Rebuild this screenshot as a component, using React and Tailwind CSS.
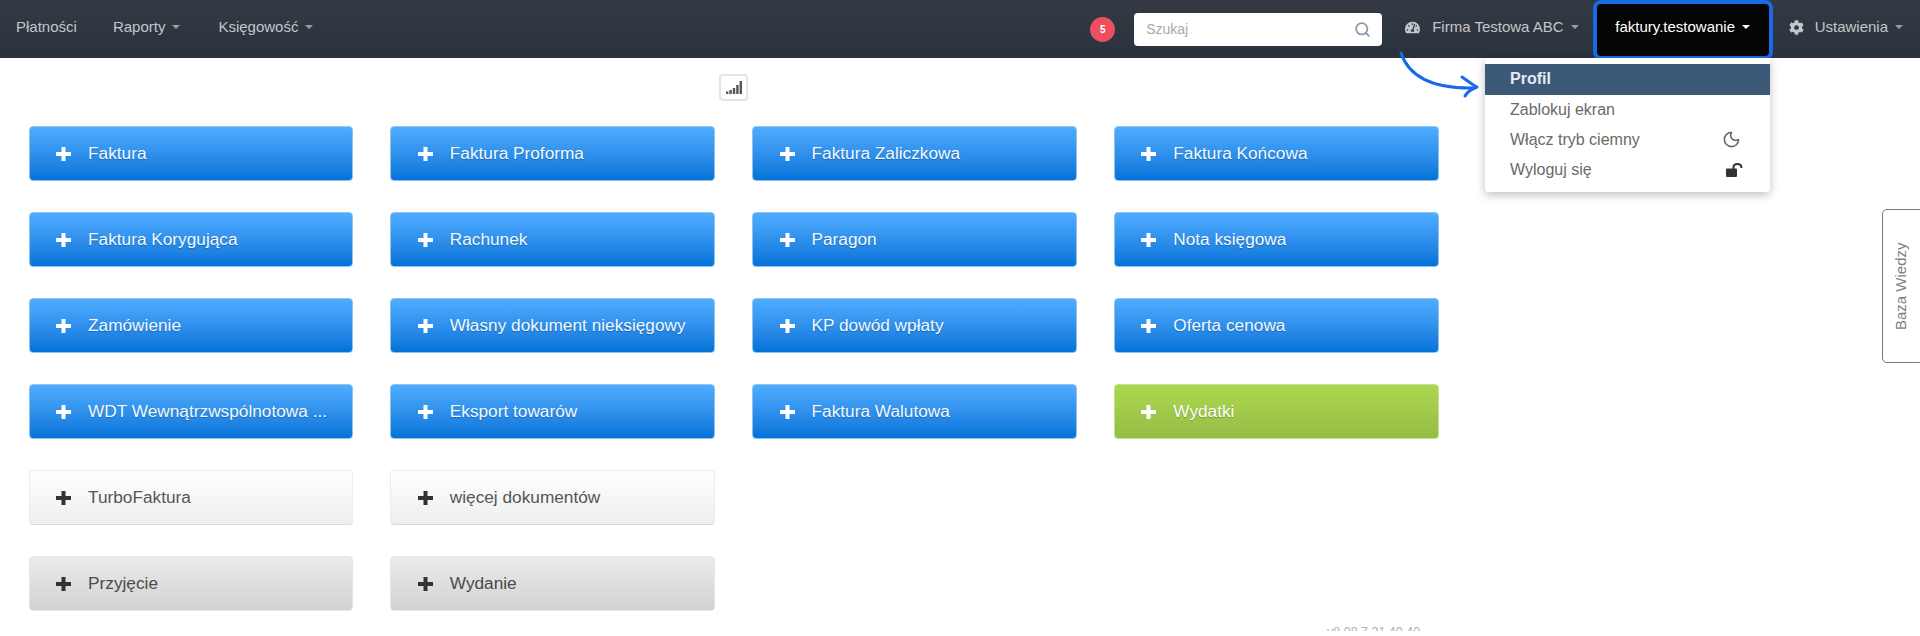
import { Search, Moon } from "lucide-react";
import { FaTachometerAlt, FaCog } from "react-icons/fa";

const rows = [
    [
        { label: "Faktura", kind: "blue" },
        { label: "Faktura Proforma", kind: "blue" },
        { label: "Faktura Zaliczkowa", kind: "blue" },
        { label: "Faktura Końcowa", kind: "blue" },
    ],
    [
        { label: "Faktura Korygująca", kind: "blue" },
        { label: "Rachunek", kind: "blue" },
        { label: "Paragon", kind: "blue" },
        { label: "Nota księgowa", kind: "blue" },
    ],
    [
        { label: "Zamówienie", kind: "blue" },
        { label: "Własny dokument nieksięgowy", kind: "blue" },
        { label: "KP dowód wpłaty", kind: "blue" },
        { label: "Oferta cenowa", kind: "blue" },
    ],
    [
        { label: "WDT Wewnątrzwspólnotowa ...", kind: "blue" },
        { label: "Eksport towarów", kind: "blue" },
        { label: "Faktura Walutowa", kind: "blue" },
        { label: "Wydatki", kind: "green" },
    ],
    [
        { label: "TurboFaktura", kind: "white" },
        { label: "więcej dokumentów", kind: "white" },
    ],
    [
        { label: "Przyjęcie", kind: "gray" },
        { label: "Wydanie", kind: "gray" },
    ],
];

const kinds = {
    blue: "bg-gradient-to-b from-[#4fadff] to-[#0073d9] border-[#8cc4ee] text-[#f2f9ff] [text-shadow:0_1px_1px_rgba(0,0,0,0.25)]",
    green: "bg-gradient-to-b from-[#acd84f] to-[#96bc45] border-[#c5e08e] text-white [text-shadow:0_1px_1px_rgba(0,0,0,0.25)]",
    white: "bg-gradient-to-b from-[#ffffff] to-[#eeeeee] border-[#ececec] border-b-[#d8d8d8] text-[#555555]",
    gray: "bg-gradient-to-b from-[#ebebeb] to-[#d2d2d2] border-[#e6e6e6] text-[#4a4a4a]",
};

function Caret({ color = "border-t-[#9a9ea3]" }) {
    return (
        <span
            className={`inline-block w-0 h-0 ml-[7px] border-x-[4.5px] border-x-transparent border-t-[4.5px] ${color}`}
        ></span>
    );
}

function PlusIcon({ className }) {
    return (
        <svg width="15" height="14" viewBox="0 0 15 14" className={className}>
            <rect x="0" y="5" width="15" height="4" fill="currentColor" />
            <rect x="5.5" y="0" width="4" height="14" fill="currentColor" />
        </svg>
    );
}

function SignalIcon() {
    return (
        <svg width="16" height="13" viewBox="0 0 16 13">
            <rect x="0" y="10.5" width="2.4" height="2.5" fill="#555555" />
            <rect x="3.4" y="9" width="2.4" height="4" fill="#555555" />
            <rect x="6.8" y="7" width="2.4" height="6" fill="#555555" />
            <rect x="10.2" y="4" width="2.4" height="9" fill="#555555" />
            <rect x="13.6" y="0" width="2.4" height="13" fill="#555555" />
        </svg>
    );
}

function OpenLockIcon() {
    return (
        <svg width="17" height="14" viewBox="0 0 17 14" fill="none">
            <rect x="0" y="5.5" width="11" height="8.5" rx="1" fill="#333333" />
            <path
                d="M7.5 6 V4.2 C7.5 2.2 9 1 11.2 1 C13.4 1 15.5 2.2 15.5 5"
                stroke="#333333"
                strokeWidth="2"
            />
        </svg>
    );
}

function DocButton({ label, kind }) {
    return (
        <div
            className={`h-[55px] flex items-center pl-[26.5px] border rounded-[4px] text-[17.25px] ${kinds[kind]}`}
        >
            <PlusIcon
                className={`mr-[17px] shrink-0 ${
                    kind === "white" || kind === "gray"
                        ? "text-[#333333]"
                        : "text-white"
                }`}
            />
            <span className="whitespace-nowrap">{label}</span>
        </div>
    );
}

export default function App() {
    return (
        <div className="relative h-[636px] overflow-hidden bg-white font-['Liberation_Sans',Arial,sans-serif]">
            {/* Navbar */}
            <div className="h-[58px] flex items-center bg-gradient-to-b from-[#333a44] to-[#29323d] text-[15px] text-[#c4c6c9]">
                <div className="flex items-center pl-[16px] -mt-[4px]">
                    <span>Płatności</span>
                    <span className="ml-[36px]">Raporty</span>
                    <Caret />
                    <span className="ml-[38px]">Księgowość</span>
                    <Caret />
                </div>

                <div className="ml-auto flex items-center h-full">
                    <div className="w-[25px] h-[25px] rounded-full bg-[#ec4f5f] text-white text-[10px] font-bold flex items-center justify-center">
                        5
                    </div>
                    <div className="ml-[19px] w-[248px] h-[33px] bg-white rounded-[4px] flex items-center justify-between pl-[12px] pr-[11px] text-[14px] text-[#a6a9ad]">
                        <span>Szukaj</span>
                        <Search size={17} strokeWidth={2.5} className="text-[#8b98a8]" />
                    </div>
                    <FaTachometerAlt className="ml-[23px] text-[15px] -mt-[4px]" />
                    <span className="ml-[12px] -mt-[4px]">Firma Testowa ABC</span>
                    <span className="-mt-[4px] flex items-center">
                        <Caret />
                    </span>
                    <div className="ml-[14px] w-[180px] h-[60px] self-start bg-[#050505] border-[4px] border-[#1a6ae6] rounded-[8px] flex items-center justify-center text-white pb-[6px]">
                        <span>faktury.testowanie</span>
                        <Caret color="border-t-white" />
                    </div>
                    <FaCog className="ml-[16px] text-[15px] -mt-[4px]" />
                    <span className="ml-[11px] -mt-[4px]">Ustawienia</span>
                    <span className="-mt-[4px] flex items-center">
                        <Caret />
                    </span>
                    <span className="w-[17px]"></span>
                </div>
            </div>

            {/* Signal toggle */}
            <div className="ml-[719px] mt-[16px] w-[29px] h-[27px] border-2 border-[#e4e4e4] rounded-[4px] flex items-end justify-center pb-[5px]">
                <SignalIcon />
            </div>

            {/* Document buttons */}
            <div className="w-[1410px] ml-[28.5px] mt-[25px] grid grid-cols-4 gap-x-[37px] gap-y-[31px]">
                {rows.map((row, i) => (
                    <div key={i} className="col-span-4 grid grid-cols-4 gap-x-[37px]">
                        {row.map((item) => (
                            <DocButton key={item.label} label={item.label} kind={item.kind} />
                        ))}
                    </div>
                ))}
            </div>

            {/* User dropdown */}
            <div className="absolute left-[1485px] top-[58px] w-[285px] h-[134px] pt-[6px] bg-white rounded-b-[4px] shadow-[0_3px_10px_rgba(0,0,0,0.25)] text-[16px] text-[#6a6a6a]">
                <div className="h-[31px] flex items-center pl-[25px] pb-[1px] bg-[#3c5a78] text-[#e6ebf0] font-bold">
                    Profil
                </div>
                <div className="h-[30px] flex items-center pl-[25px]">Zablokuj ekran</div>
                <div className="h-[30px] flex items-center justify-between pl-[25px] pr-[29px] pb-[1px]">
                    <span>Włącz tryb ciemny</span>
                    <Moon size={19} strokeWidth={2} />
                </div>
                <div className="h-[30px] flex items-center justify-between pl-[25px] pr-[27px]">
                    <span>Wyloguj się</span>
                    <OpenLockIcon />
                </div>
            </div>

            {/* Annotation arrow */}
            <svg
                className="absolute left-[1396px] top-[50px]"
                width="92"
                height="56"
                viewBox="0 0 92 56"
                fill="none"
            >
                <path
                    d="M5 3 C 12 24, 32 39, 78 38"
                    stroke="#1a6ae6"
                    strokeWidth="3"
                    strokeLinecap="round"
                />
                <path
                    d="M66 27 C 72 31, 77 35, 81 37 C 76 39, 71 42, 69 46"
                    stroke="#1a6ae6"
                    strokeWidth="3"
                    strokeLinecap="round"
                    strokeLinejoin="round"
                />
            </svg>

            {/* Knowledge base tab */}
            <div className="absolute right-[-4px] top-[209px] w-[42px] h-[154px] bg-white border border-[#777777] rounded-[5px] flex items-center justify-center pr-[4px]">
                <span className="-rotate-90 whitespace-nowrap text-[15px] text-[#808080]">
                    Baza Wiedzy
                </span>
            </div>

            {/* Version, cut off at the bottom */}
            <div className="absolute left-[1327px] top-[625px] h-[6px] overflow-hidden text-[12.5px] leading-[14px] text-[#b0b0b0]">
                v8.08.7.21.40.40
            </div>
        </div>
    );
}
